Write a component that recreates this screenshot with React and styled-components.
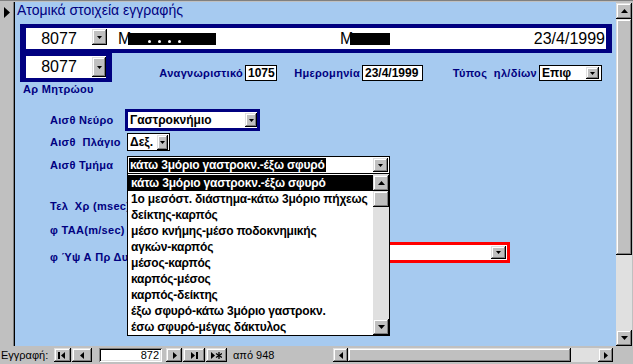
import styled, { createGlobalStyle, css } from "styled-components";

const navy = "#000080";
const sky = "#a6caf0";
const face = "#c0c0c0";
const uiFont = `"Liberation Sans", Arial, sans-serif`;

const GlobalStyle = createGlobalStyle`
  *, *::before, *::after { box-sizing: border-box; }
  body { margin: 0; background: ${face}; font-family: ${uiFont}; }
`;

const raised = css`
  background: ${face};
  box-shadow: inset -1px -1px #000, inset 1px 1px #dfdfdf,
    inset -2px -2px #808080, inset 2px 2px #fff;
`;

const sunken = css`
  background: #fff;
  box-shadow: inset 1px 1px #808080, inset -1px -1px #fff,
    inset 2px 2px #000, inset -2px -2px #dfdfdf;
`;

const Tri = ({ dir = "down", w = 5, h = 3 }) => {
  const pts = {
    down: `0,0 ${w},0 ${w / 2},${h}`,
    up: `0,${h} ${w},${h} ${w / 2},0`,
    left: `${w},0 ${w},${h} 0,${h / 2}`,
    right: `0,0 0,${h} ${w},${h / 2}`,
  }[dir];
  return (
    <svg width={w} height={h} viewBox={`0 0 ${w} ${h}`}>
      <polygon points={pts} fill="#000" />
    </svg>
  );
};

const NavIcon = ({ kind }) => (
  <svg width="11" height="7" viewBox="0 0 11 7">
    {kind === "first" && (
      <>
        <rect x="1" y="0" width="2" height="7" fill="#000" />
        <polygon points="8,0 8,7 4,3.5" fill="#000" />
      </>
    )}
    {kind === "prev" && <polygon points="7,0 7,7 3,3.5" fill="#000" />}
    {kind === "next" && <polygon points="4,0 4,7 8,3.5" fill="#000" />}
    {kind === "last" && (
      <>
        <polygon points="2,0 2,7 6,3.5" fill="#000" />
        <rect x="7" y="0" width="2" height="7" fill="#000" />
      </>
    )}
    {kind === "new" && (
      <>
        <polygon points="0,0 0,7 4,3.5" fill="#000" />
        <g stroke="#000" strokeWidth="1.3">
          <line x1="8" y1="0" x2="8" y2="7" />
          <line x1="5" y1="1.5" x2="11" y2="5.5" />
          <line x1="5" y1="5.5" x2="11" y2="1.5" />
        </g>
      </>
    )}
  </svg>
);

const Window = styled.div`
  width: 633px;
  height: 364px;
  display: grid;
  grid-template-columns: 15px 601px 17px;
  grid-template-rows: 344px 18px;
  border-top: 1px solid #808080;
  padding-top: 1px;
  background: ${face};
`;

const Selector = styled.div`
  background: ${face};
  border-right: 1px solid #000;
  box-shadow: inset -1px 0 #808080;
  padding: 2px 0 0 4px;
`;

const Form = styled.div`
  position: relative;
  background: ${sky};
  overflow: hidden;
`;

const Title = styled.div`
  margin: -1px 0 0 2px;
  height: 18px;
  line-height: 18px;
  font-size: 14px;
  color: ${navy};
`;

const TopBar = styled.div`
  margin: 5px 0 0 5px;
  width: 592px;
  height: 29px;
  padding: 4px 6px;
  background: ${navy};
`;

const WhiteStrip = styled.div`
  display: flex;
  align-items: flex-start;
  height: ${(p) => p.$h}px;
  background: #fff;
  font-size: 16px;
  line-height: ${(p) => p.$h}px;
  color: #000;
`;

const ComboValue = styled.div`
  width: 66px;
  text-align: center;
  flex: none;
`;

const Btn = styled.div`
  ${raised}
  flex: none;
  width: ${(p) => p.$w}px;
  height: ${(p) => p.$h}px;
  margin: ${(p) => p.$m || "0"};
  display: flex;
  align-items: center;
  justify-content: center;
`;

const NameCell = styled.div`
  width: ${(p) => p.$w}px;
  margin-left: ${(p) => p.$ml || 0}px;
  display: flex;
  align-items: flex-start;
  flex: none;
`;

const Ink = styled.span`
  display: flex;
  align-items: flex-end;
  gap: 7px;
  width: ${(p) => p.$w}px;
  height: 12px;
  margin: 5px 0 0 -3px;
  padding: 0 0 2px ${(p) => p.$pad}px;
  background: #000;
`;

const Dot = styled.span`
  width: 3px;
  height: 3px;
  border-radius: 50%;
  background: #fff;
`;

const DateText = styled.div`
  margin-left: auto;
  padding-right: 1px;
`;

const IdRow = styled.div`
  display: flex;
  align-items: flex-start;
  margin-left: 5px;
  height: 29px;
`;

const NavyBox = styled.div`
  width: 92px;
  height: 29px;
  padding: 3px 6px 4px;
  background: ${navy};
  flex: none;
`;

const FieldGroup = styled.div`
  display: flex;
  align-items: center;
  margin-top: 12px;
`;

const Label = styled.div`
  flex: none;
  width: ${(p) => p.$w}px;
  text-align: ${(p) => (p.$right ? "right" : "left")};
  margin-top: ${(p) => p.$mt || 0}px;
  font-size: 11px;
  font-weight: bold;
  letter-spacing: 0.3px;
  line-height: 13px;
  color: ${navy};
  white-space: pre;
`;

const Box = styled.div`
  flex: none;
  display: flex;
  align-items: flex-start;
  width: ${(p) => p.$w}px;
  height: 16px;
  margin-left: 2px;
  padding-left: 2px;
  border: 1px solid #000;
  background: #fff;
  font-size: 12px;
  font-weight: bold;
  line-height: 14px;
  color: #000;
`;

const RegLabel = styled(Label)`
  margin: 1px 0 0 8px;
`;

const Rows = styled.div`
  display: flex;
  flex-direction: column;
  padding-left: 35px;
`;

const Row = styled.div`
  display: flex;
  align-items: ${(p) => (p.$top ? "flex-start" : "center")};
  margin-top: ${(p) => p.$mt}px;
`;

const Combo = styled.div`
  position: relative;
  flex: none;
  display: flex;
  align-items: center;
  width: ${(p) => p.$w}px;
  height: ${(p) => p.$h}px;
  border: ${(p) => p.$bw}px solid ${(p) => p.$bc};
  background: #fff;
  font-size: 12px;
  font-weight: bold;
  line-height: 16px;
  color: #000;
`;

const ComboText = styled.span`
  flex: 1;
  padding-left: ${(p) => (p.$flush ? 0 : 2)}px;
  white-space: nowrap;
  overflow: hidden;
`;

const Picked = styled.span`
  margin-left: 1px;
  padding: 0 1px;
  background: #000;
  color: #fff;
  line-height: 14px;
  letter-spacing: -0.2px;
  white-space: nowrap;
`;

const DropList = styled.div`
  position: absolute;
  top: 100%;
  left: -1px;
  z-index: 3;
  display: flex;
  width: 263px;
  height: 163px;
  border: 1px solid #000;
  background: #fff;
`;

const Options = styled.div`
  flex: 1;
  padding-top: 1px;
`;

const Option = styled.div`
  height: 16px;
  padding-left: 3px;
  font-size: 12px;
  font-weight: bold;
  letter-spacing: -0.2px;
  line-height: 16px;
  white-space: nowrap;
  overflow: hidden;
  background: ${(p) => (p.$on ? "#000" : "#fff")};
  color: ${(p) => (p.$on ? "#fff" : "#000")};
`;

const ScrollCol = styled.div`
  display: flex;
  flex-direction: column;
  width: 16px;
  flex: none;
  padding-top: ${(p) => p.$pt || 0}px;
  background: #e0e0e0;
`;

const Thumb = styled.div`
  ${raised}
  height: ${(p) => p.$h}px;
  flex: none;
`;

const Track = styled.div`
  flex: 1;
`;

const VScroll = styled.div`
  display: flex;
  padding: 1px 1px 0 0;
  background: ${face};
`;

const NavBar = styled.div`
  grid-column: 1 / 3;
  display: flex;
  align-items: center;
  font-size: 11px;
  color: #000;
`;

const NavLabel = styled.div`
  width: 54px;
  padding-left: 1px;
  flex: none;
`;

const NavField = styled.div`
  ${sunken}
  width: 63px;
  height: 14px;
  margin: 0 4px 0 7px;
  padding-right: 3px;
  text-align: right;
  line-height: 14px;
  flex: none;
`;

const OfText = styled.div`
  margin-left: 6px;
`;

const HScroll = styled.div`
  display: flex;
  width: 280px;
  height: 14px;
  margin: 0 3px 0 auto;
  background: #e0e0e0;
`;

const HThumb = styled.div`
  ${raised}
  width: 223px;
  flex: none;
`;

const options = [
  "κάτω 3μόριο γαστροκν.-έξω σφυρό",
  "1ο μεσόστ. διάστημα-κάτω 3μόριο πήχεως",
  "δείκτης-καρπός",
  "μέσο κνήμης-μέσο ποδοκνημικής",
  "αγκών-καρπός",
  "μέσος-καρπός",
  "καρπός-μέσος",
  "καρπός-δείκτης",
  "έξω σφυρό-κάτω 3μόριο γαστροκν.",
  "έσω σφυρό-μέγας δάκτυλος",
];

export default function App() {
  return (
    <>
      <GlobalStyle />
      <Window>
        <Selector>
          <Tri dir="right" w={6} h={11} />
        </Selector>

        <Form>
          <Title>Ατομικά στοιχεία εγγραφής</Title>

          <TopBar>
            <WhiteStrip $h={21}>
              <ComboValue>8077</ComboValue>
              <Btn $w={15} $h={16} $m="1px 0 0 0">
                <Tri />
              </Btn>
              <NameCell $w={222} $ml={11}>
                <span>M</span>
                <Ink $w={88} $pad={20}>
                  <Dot />
                  <Dot />
                  <Dot />
                  <Dot />
                </Ink>
              </NameCell>
              <NameCell $w={50}>
                <span>M</span>
                <Ink $w={42} $pad={40} />
              </NameCell>
              <DateText>23/4/1999</DateText>
            </WhiteStrip>
          </TopBar>

          <IdRow>
            <NavyBox>
              <WhiteStrip $h={22}>
                <ComboValue>8077</ComboValue>
                <Btn $w={14} $h={20} $m="1px 0 0 0">
                  <Tri />
                </Btn>
              </WhiteStrip>
            </NavyBox>
            <FieldGroup>
              <Label $w={131} $right>Αναγνωριστικό</Label>
              <Box $w={32}>1075</Box>
              <Label $w={83} $right>Ημερομηνία</Label>
              <Box $w={61}>23/4/1999</Box>
              <Label $w={114} $right>{"Τύπος  ηλ/δίων"}</Label>
              <Box $w={63}>
                <span style={{ flex: 1 }}>Επιφ</span>
                <Btn $w={13} $h={12} $m="1px 2px 0 0">
                  <Tri />
                </Btn>
              </Box>
            </FieldGroup>
          </IdRow>

          <RegLabel $w={100}>Αρ Μητρώου</RegLabel>

          <Rows>
            <Row $mt={13}>
              <Label $w={75}>Αισθ Νεύρο</Label>
              <Combo $w={135} $h={22} $bw={3} $bc={navy}>
                <ComboText>Γαστροκνήμιο</ComboText>
                <Btn $w={12} $h={14}>
                  <Tri />
                </Btn>
              </Combo>
            </Row>

            <Row $mt={2}>
              <Label $w={77}>{"Αισθ  Πλάγιο"}</Label>
              <Combo $w={43} $h={18} $bw={1} $bc="#000">
                <ComboText>Δεξ.</ComboText>
                <Btn $w={11} $h={15} $m="0 1px 0 0">
                  <Tri />
                </Btn>
              </Combo>
            </Row>

            <Row $mt={5}>
              <Label $w={77}>Αισθ Τμήμα</Label>
              <Combo $w={263} $h={18} $bw={1} $bc="#000">
                <ComboText $flush>
                  <Picked>{options[0]}</Picked>
                </ComboText>
                <Btn $w={15} $h={14} $m="0 1px 0 0">
                  <Tri />
                </Btn>
                <DropList>
                  <Options>
                    {options.map((o, i) => (
                      <Option key={o} $on={i === 0}>
                        {o}
                      </Option>
                    ))}
                  </Options>
                  <ScrollCol $pt={1}>
                    <Btn $w={16} $h={16}>
                      <Tri dir="up" w={7} h={4} />
                    </Btn>
                    <Thumb $h={16} />
                    <Track />
                    <Btn $w={16} $h={16}>
                      <Tri dir="down" w={7} h={4} />
                    </Btn>
                  </ScrollCol>
                </DropList>
              </Combo>
            </Row>

            <Row $mt={26}>
              <Label $w={77}>{"Τελ  Χρ (msec)"}</Label>
            </Row>

            <Row $mt={11}>
              <Label $w={77}>φ TAA(m/sec)</Label>
            </Row>

            <Row $mt={5} $top>
              <Label $w={77} $mt={9}>φ Ύψ Α Πρ Δυν</Label>
              <Combo $w={383} $h={21} $bw={3} $bc="#ff0000">
                <ComboText />
                <Btn $w={15} $h={13} $m="0 1px 0 0">
                  <Tri />
                </Btn>
              </Combo>
            </Row>
          </Rows>
        </Form>

        <VScroll>
          <ScrollCol>
            <Btn $w={16} $h={16}>
              <Tri dir="up" w={7} h={4} />
            </Btn>
            <Thumb $h={236} />
            <Track />
            <Btn $w={16} $h={16}>
              <Tri dir="down" w={7} h={4} />
            </Btn>
          </ScrollCol>
        </VScroll>

        <NavBar>
          <NavLabel>Εγγραφή:</NavLabel>
          <Btn $w={17} $h={14}>
            <NavIcon kind="first" />
          </Btn>
          <Btn $w={20} $h={14} $m="0 0 0 1px">
            <NavIcon kind="prev" />
          </Btn>
          <NavField>872</NavField>
          <Btn $w={16} $h={14}>
            <NavIcon kind="next" />
          </Btn>
          <Btn $w={22} $h={14} $m="0 0 0 1px">
            <NavIcon kind="last" />
          </Btn>
          <Btn $w={21} $h={14} $m="0 0 0 1px">
            <NavIcon kind="new" />
          </Btn>
          <OfText>από 948</OfText>
          <HScroll>
            <Btn $w={15} $h={14}>
              <Tri dir="left" w={4} h={7} />
            </Btn>
            <HThumb />
            <Track />
            <Btn $w={15} $h={14}>
              <Tri dir="right" w={4} h={7} />
            </Btn>
          </HScroll>
        </NavBar>
        <div />
      </Window>
    </>
  );
}
